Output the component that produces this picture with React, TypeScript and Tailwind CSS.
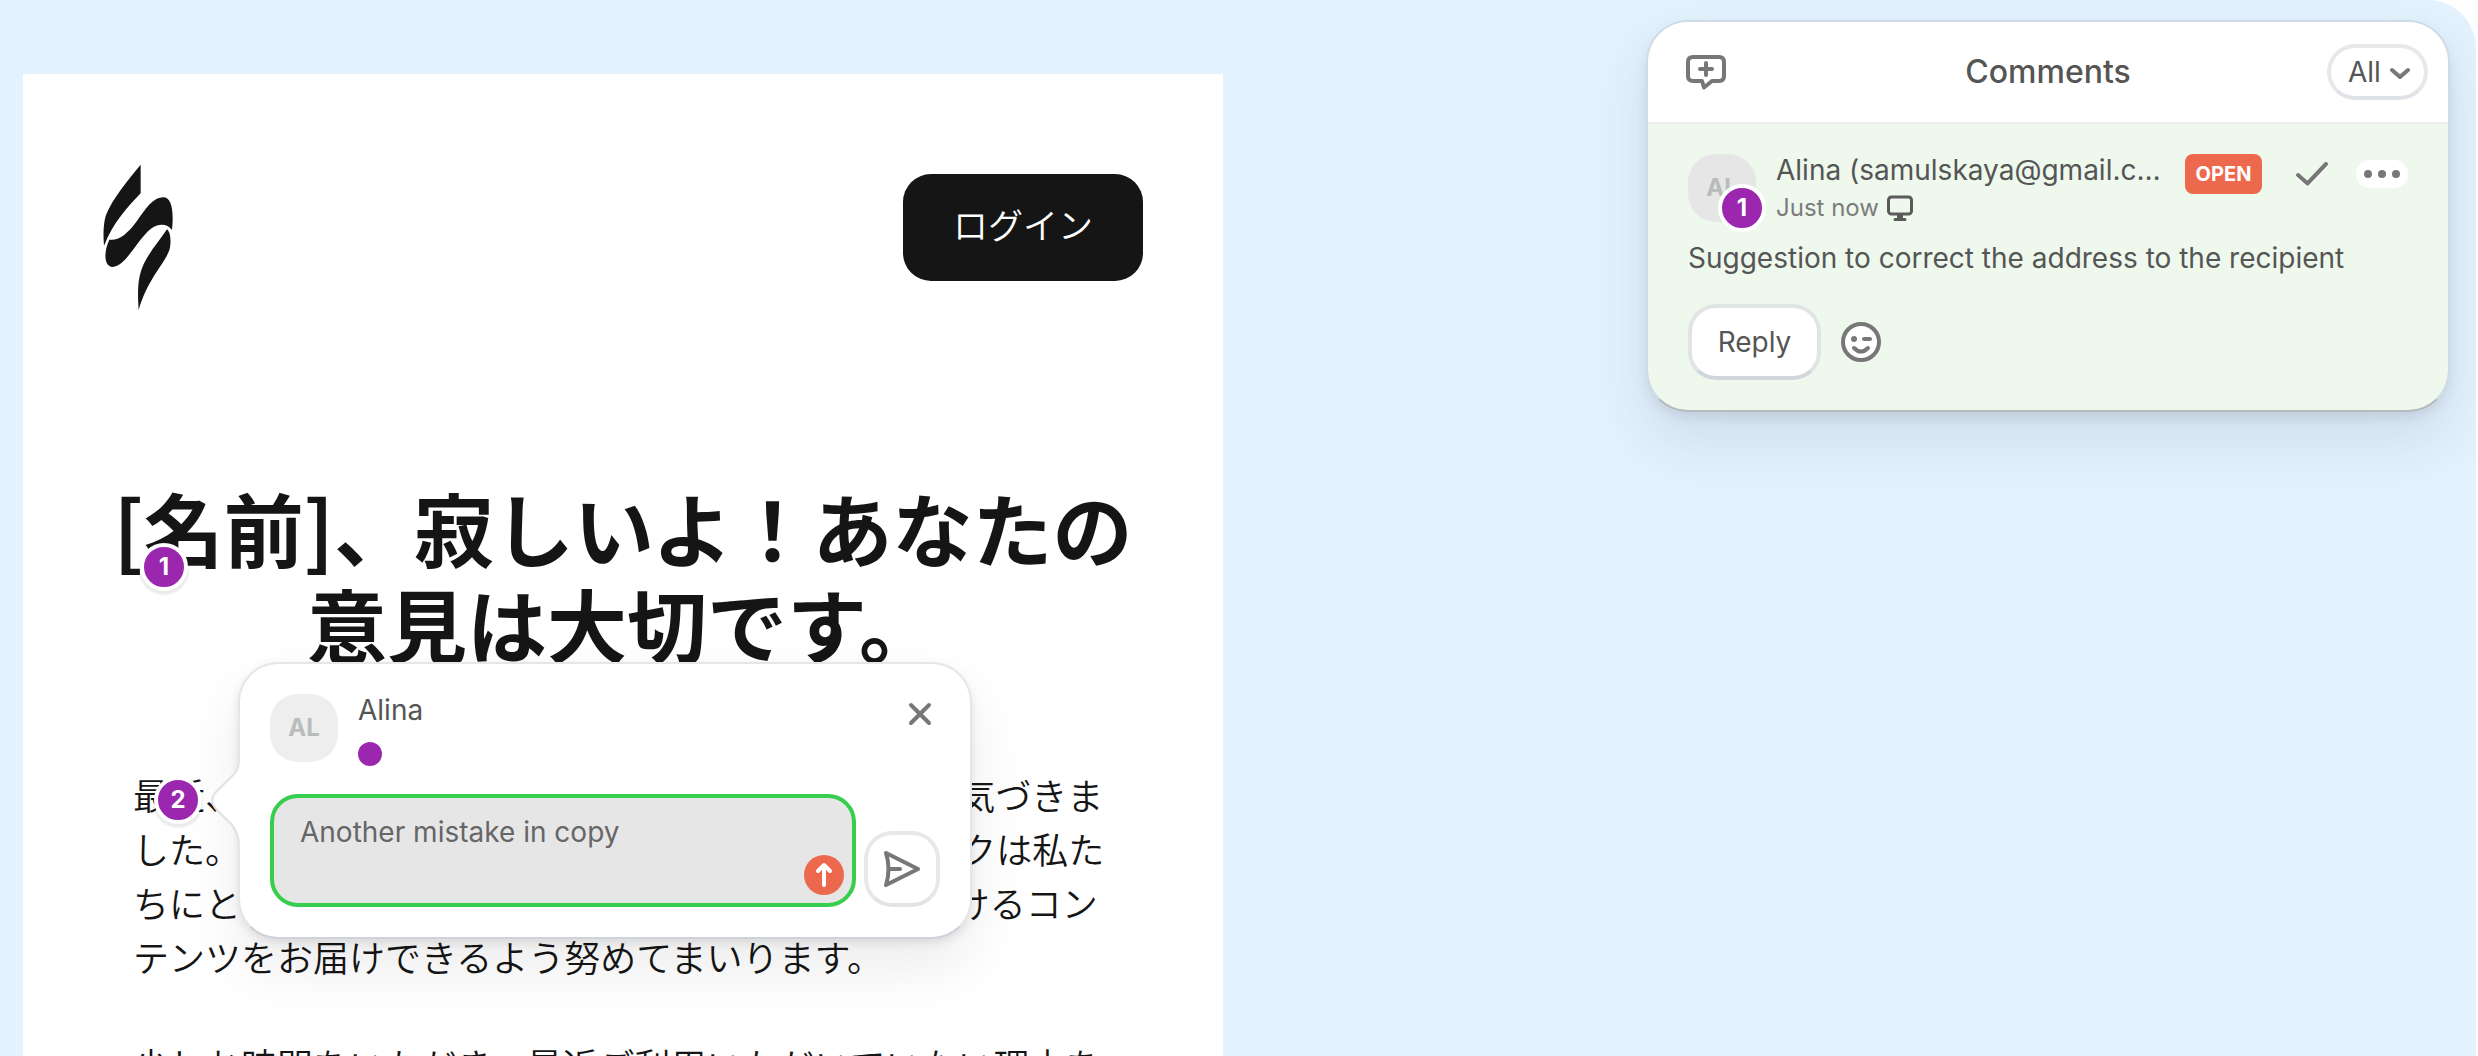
import { useState } from 'react';
import type { ReactNode } from 'react';

interface PinProps {
  label: string;
  className?: string;
}

function Pin({ label, className = '' }: PinProps) {
  return (
    <span
      className={`absolute flex h-12 w-12 items-center justify-center rounded-full border-4 border-white bg-[#9b27af] text-[24px] font-bold leading-none text-white ${className}`}
    >
      {label}
    </span>
  );
}

interface AvatarProps {
  initials: string;
  className: string;
  children?: ReactNode;
}

function Avatar({ initials, className, children }: AvatarProps) {
  return (
    <div
      className={`relative flex h-[68px] w-[68px] shrink-0 items-center justify-center rounded-[28px] text-[24px] font-bold text-[#b8bcbc] ${className}`}
    >
      {initials}
      {children}
    </div>
  );
}

function Logo() {
  return (
    <svg className="h-[168px] w-[70px]" viewBox="129 12 210 504" fill="#151515" aria-hidden="true">
      <path d="M242 77V163C205 201 160 250 132 320C129 280 131 250 138 228C158 179 198 130 242 77Z" />
      <path d="M148 302C178 306 202 284 228 250C256 212 276 176 310 175C335 175 342 215 336 273C322 254 296 252 272 270C232 302 198 381 158 384C132 384 130 340 148 302Z" />
      <path d="M321 271C333 280 334 312 328 334C310 380 262 422 236 513C232 455 234 420 246 388C262 345 296 309 321 271Z" />
    </svg>
  );
}

function CommentPopover() {
  const [text, setText] = useState('Another mistake in copy');

  return (
    <section className="absolute left-[215px] top-[588px] w-[734px] rounded-[40px] border-2 border-[#e6e6e6] border-b-[#cdd3d8] bg-white px-[30px] py-[30px] font-['Inter',sans-serif] shadow-[0_28px_60px_rgba(0,0,0,0.08),0_4px_10px_rgba(0,0,0,0.09)]">
      <svg className="absolute -left-[29px] top-[86px] h-[102px] w-[31px]" viewBox="0 0 31 102" aria-hidden="true">
        <path
          d="M28 5C28 16 27 20 22 25L4 43Q-2 51 5 59L20 74Q28 83 28 96"
          fill="none"
          stroke="#e2e2e2"
          strokeWidth="2"
        />
        <path d="M31 5H29C29 16 28 21 23 26L5 44Q0 51 6 58L21 73Q29 82 29 96H31Z" fill="#fff" />
      </svg>
      <div className="flex gap-5">
        <Avatar initials="AL" className="bg-[#eeeeee]" />
        <div className="flex grow flex-col gap-4">
          <p className="text-[28px] leading-8 text-[#555]">Alina</p>
          <span className="h-6 w-6 rounded-full bg-[#9b27af]" />
        </div>
        <button type="button" aria-label="Close" className="mr-1 mt-1 flex h-8 w-8 items-center justify-center">
          <svg className="h-6 w-6" viewBox="0 0 24 24" stroke="#777" strokeWidth="4" strokeLinecap="round">
            <path d="M3 3L21 21M21 3L3 21" />
          </svg>
        </button>
      </div>
      <div className="mt-7 flex items-end gap-2">
        <div className="relative grow">
          <textarea
            aria-label="Comment"
            value={text}
            onChange={(e) => setText(e.target.value)}
            className="block h-[113px] w-full resize-none rounded-[28px] border-4 border-[#36ce4c] bg-[#e6e6e6] px-[26px] py-4 text-[28px] leading-9 text-[#666] outline-none"
          />
          <button
            type="button"
            aria-label="Submit"
            className="absolute bottom-3 right-3 flex h-10 w-10 items-center justify-center rounded-full bg-[#ed694e]"
          >
            <svg className="h-7 w-7" viewBox="0 0 28 28" fill="none" stroke="#fff" strokeWidth="4" strokeLinecap="round" strokeLinejoin="round">
              <path d="M14 24V4M8 10L14 4L20 10" />
            </svg>
          </button>
        </div>
        <button
          type="button"
          aria-label="Send"
          className="flex h-[76px] w-[76px] items-center justify-center rounded-[28px] border-4 border-[#e8e8e8] border-b-[#e0e4e7] bg-white"
        >
          <svg className="h-10 w-10" viewBox="0 0 40 40" fill="none" stroke="#777" strokeWidth="4" strokeLinecap="round" strokeLinejoin="round">
            <path d="M4 4L36 20L4 36Q9 20 4 4ZM8 20H18" />
          </svg>
        </button>
      </div>
    </section>
  );
}

function EmailPreview() {
  return (
    <main className="relative mt-[74px] w-[1200px] shrink-0 bg-white font-['Noto_Sans_CJK_JP',sans-serif] text-[#151515]">
      <header className="flex items-center justify-between px-20 pt-[69px]">
        <Logo />
        <a
          href="#login"
          className="flex h-[107px] w-60 items-center justify-center rounded-[28px] bg-[#151515] pb-[6px] text-[35px] font-[350] text-white"
        >
          ログイン
        </a>
      </header>
      <h1 className="mt-[167px] text-center text-[80px] font-bold leading-[96px]">
        [名前]、寂しいよ！あなたの
        <br />
        意見は大切です。
      </h1>
      <div className="mt-[97px] flex flex-col gap-[54px] px-[110px] text-[36px] font-[350] leading-[54px]">
        <p>
          最近、あなたがメールをご覧になっていないことに気づきました。あなたからいただけるご意見やフィードバックは私たちにとって非常に大切であり、より楽しんでいただけるコンテンツをお届けできるよう努めてまいります。
        </p>
        <p>少しお時間をいただき、最近ご利用いただいていない理由をお聞かせください。</p>
      </div>
      <CommentPopover />
      <Pin label="1" className="left-[117px] top-[469px] font-['Inter',sans-serif] shadow-[0_3px_2px_1px_rgba(0,0,0,0.08)]" />
      <Pin label="2" className="left-[131px] top-[702px] font-['Inter',sans-serif] shadow-[0_3px_2px_1px_rgba(0,0,0,0.08)]" />
    </main>
  );
}

function CommentCard() {
  return (
    <article className="px-10 pb-[30px] pt-[30px]">
      <div className="flex items-start">
        <Avatar initials="AL" className="bg-[#e6e6e6]">
          <Pin label="1" className="left-[30px] top-[30px]" />
        </Avatar>
        <div className="ml-5 w-[389px]">
          <p className="truncate text-[28px] leading-8 text-[#555]">Alina (samulskaya@gmail.com)</p>
          <p className="mt-2 flex items-center gap-2 text-[24px] leading-7 text-[#7c7c7c]">
            Just now
            <svg className="h-[26px] w-[26px]" viewBox="0 0 26 26" fill="none" stroke="#5a5a5a" strokeWidth="3" strokeLinecap="round" aria-hidden="true">
              <rect x="1.5" y="2" width="23" height="17" rx="3" />
              <path d="M8 24.5H18" />
              <path d="M10 20H16V25H10Z" fill="#5a5a5a" stroke="none" />
            </svg>
          </p>
        </div>
        <span className="ml-5 flex h-10 w-[77px] items-center justify-center rounded-lg bg-[#ed694e] text-[20px] font-bold text-white">
          OPEN
        </span>
        <button type="button" aria-label="Resolve" className="ml-auto flex h-10 w-8 items-center">
          <svg className="h-6 w-8" viewBox="0 0 32 24" fill="none" strokeLinecap="round" strokeLinejoin="round">
            <path d="M2 15L11.5 23L30 4" stroke="#fff" strokeWidth="4" />
            <path d="M2 13L11.5 21.5L30 2" stroke="#777" strokeWidth="4" />
          </svg>
        </button>
        <button type="button" aria-label="More" className="ml-7 mt-[6px] flex h-7 w-[52px] items-center justify-center gap-[6px] rounded-full bg-white">
          <span className="h-2 w-2 rounded-full bg-[#777]" />
          <span className="h-2 w-2 rounded-full bg-[#777]" />
          <span className="h-2 w-2 rounded-full bg-[#777]" />
        </button>
      </div>
      <p className="mt-[18px] text-[28px] leading-9 text-[#555]">Suggestion to correct the address to the recipient</p>
      <div className="mt-7 flex items-center gap-5">
        <button
          type="button"
          className="h-[76px] w-[133px] rounded-[28px] border-4 border-[#e0e4e4] border-b-[#d0d7dc] bg-white text-[28px] text-[#555]"
        >
          Reply
        </button>
        <button type="button" aria-label="Add reaction">
          <svg className="h-10 w-10" viewBox="0 0 40 40" fill="none" stroke="#777" strokeWidth="4" strokeLinecap="round">
            <circle cx="20" cy="20" r="18" fill="#fff" />
            <circle cx="13" cy="17" r="3" fill="#777" stroke="none" />
            <path d="M23 17H29M13 26Q20 33 27 26" />
          </svg>
        </button>
      </div>
    </article>
  );
}

function CommentsPanel() {
  return (
    <aside className="mr-[26px] mt-5 w-[804px] shrink-0 self-start overflow-hidden rounded-[42px] border-2 border-[#cfdbe6] border-b-[#b4babd] bg-[#eef8ed] font-['Inter',sans-serif] shadow-[0_28px_60px_rgba(60,70,110,0.12),0_6px_12px_rgba(0,0,0,0.08)]">
      <header className="grid h-[102px] grid-cols-[1fr_auto_1fr] items-center border-b-2 border-[#ececec] bg-white px-5">
        <button type="button" aria-label="New comment" className="justify-self-start px-[18px]">
          <svg className="h-10 w-10" viewBox="0 0 40 40" fill="none" stroke="#777" strokeWidth="4" strokeLinecap="round" strokeLinejoin="round">
            <path d="M7 5H33Q38 5 38 10V24Q38 29 33 29H26L18 35.5L16 29H7Q2 29 2 24V10Q2 5 7 5Z" />
            <path d="M20 11V23M14 17H26" />
          </svg>
        </button>
        <h2 className="text-[32px] font-medium leading-10 text-[#555]">Comments</h2>
        <div className="relative justify-self-end">
          <select
            aria-label="Filter comments"
            className="h-14 w-[101px] appearance-none rounded-full border-4 border-[#e8e8e8] border-b-[#dfe3e7] bg-white pl-[17px] text-[28px] text-[#555] outline-none"
          >
            <option>All</option>
          </select>
          <svg className="pointer-events-none absolute right-[18px] top-[22px] h-4 w-5" viewBox="0 0 20 16" fill="none" stroke="#777" strokeWidth="4" strokeLinecap="round" strokeLinejoin="round">
            <path d="M2 4L10 11L18 4" />
          </svg>
        </div>
      </header>
      <CommentCard />
    </aside>
  );
}

export default function App() {
  return (
    <div className="h-screen overflow-hidden bg-white pr-[2px]">
      <div className="flex h-full justify-between overflow-hidden rounded-tr-[48px] bg-[#e3f2fd] pl-[23px]">
        <EmailPreview />
        <CommentsPanel />
      </div>
    </div>
  );
}
